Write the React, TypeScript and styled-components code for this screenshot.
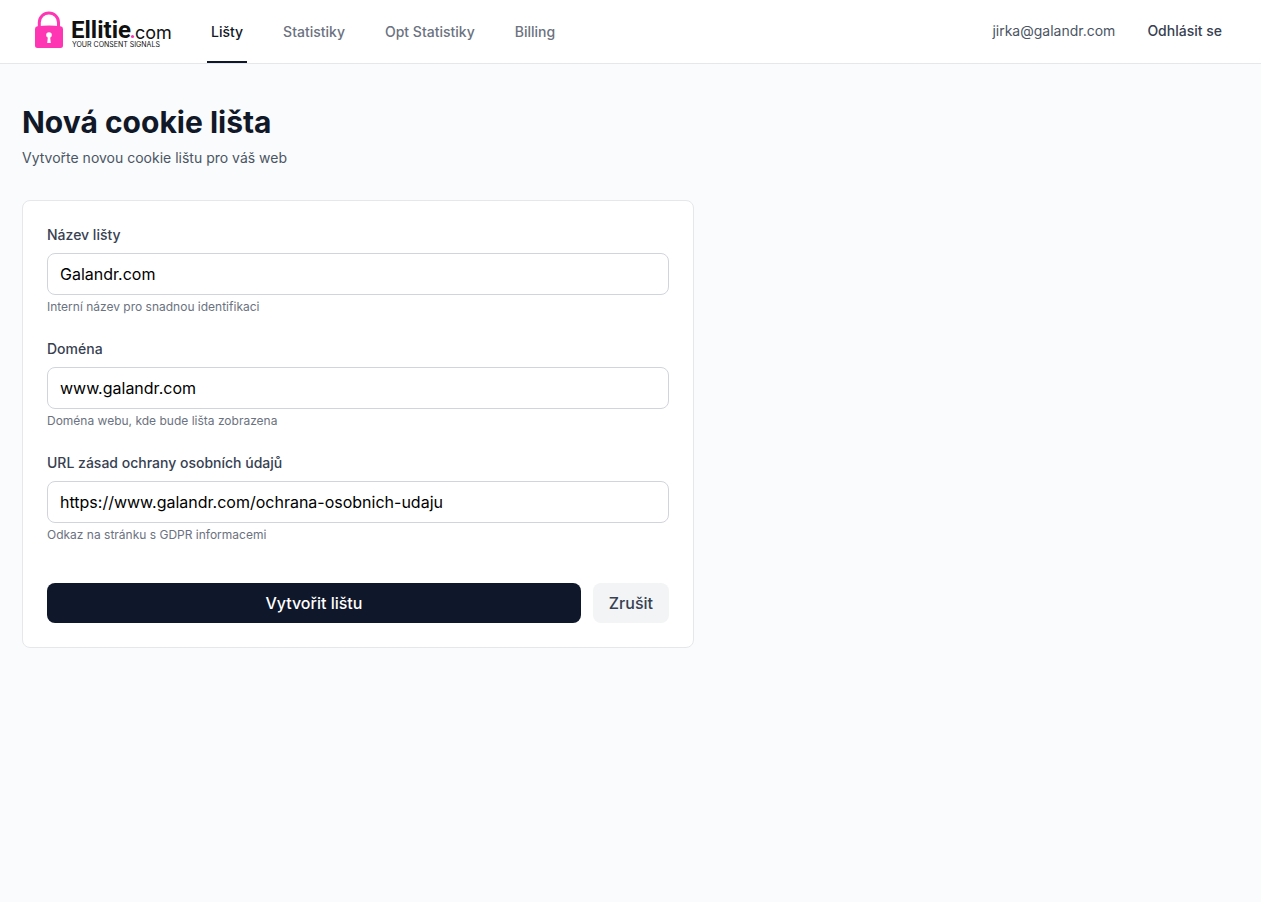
import React from 'react';
import styled, { createGlobalStyle, css } from 'styled-components';

const GlobalStyle = createGlobalStyle`
  *, *::before, *::after { box-sizing: border-box; }
  body {
    margin: 0;
    background: #f9fbfd;
    color: #111827;
    font-family: Inter, "Liberation Sans", sans-serif;
    font-size: 14px;
    line-height: 20px;
  }
`;

const Header = styled.header`
  display: flex;
  align-items: center;
  justify-content: space-between;
  height: 64px;
  padding: 0 39px 0 34px;
  background: #ffffff;
  border-bottom: 1px solid #e5e7eb;
`;

const HeaderGroup = styled.div`
  display: flex;
  align-items: center;
  align-self: stretch;
`;

const LogoLink = styled.a`
  display: flex;
  align-items: center;
  margin-right: 33px;
`;

const Nav = styled.nav`
  display: flex;
  align-self: stretch;
  gap: 32px;
`;

const NavLink = styled.a<{ $active?: boolean }>`
  display: flex;
  align-items: center;
  padding: 2px 4px 0;
  border-bottom: 2px solid transparent;
  color: #6b7280;
  font-weight: 500;
  text-decoration: none;
  ${({ $active }) => $active && css`
    border-color: #0f172a;
    color: #111827;
  `}
`;

const Account = styled.div`
  display: flex;
  align-items: center;
  gap: 32px;
  padding-bottom: 1px;
  color: #4b5563;
`;

const LogoutButton = styled.button`
  padding: 0;
  border: 0;
  background: none;
  color: #374151;
  font: inherit;
  font-weight: 500;
  cursor: pointer;
`;

const Main = styled.main`
  padding: 40px 22px;
`;

const Title = styled.h1`
  margin: 0;
  font-size: 30px;
  line-height: 36px;
  font-weight: 700;
`;

const Subtitle = styled.p`
  margin: 8px 0 32px;
  color: #4b5563;
`;

const FormCard = styled.form`
  display: flex;
  flex-direction: column;
  gap: 24px;
  max-width: 672px;
  padding: 24px;
  background: #ffffff;
  border: 1px solid #e5e7eb;
  border-radius: 8px;
`;

const Field = styled.div`
  display: flex;
  flex-direction: column;
`;

const Label = styled.label`
  margin-bottom: 8px;
  color: #374151;
  font-weight: 500;
`;

const TextInput = styled.input`
  width: 100%;
  height: 42px;
  padding: 8px 12px;
  border: 1px solid #d1d5db;
  border-radius: 8px;
  background: #ffffff;
  color: #000000;
  font: inherit;
  font-size: 16px;
  line-height: 24px;
`;

const Hint = styled.p`
  margin: 4px 0 0;
  color: #6b7280;
  font-size: 12px;
  line-height: 16px;
`;

const Actions = styled.div`
  display: flex;
  gap: 12px;
  padding-top: 16px;
`;

const Button = styled.button<{ $primary?: boolean }>`
  flex: ${({ $primary }) => ($primary ? '1' : 'none')};
  padding: 8px 16px;
  border: 0;
  border-radius: 8px;
  background: ${({ $primary }) => ($primary ? '#0f172a' : '#f3f4f6')};
  color: ${({ $primary }) => ($primary ? '#ffffff' : '#374151')};
  font: inherit;
  font-size: 16px;
  line-height: 24px;
  font-weight: 500;
  cursor: pointer;
`;

const Logo = () => (
  <svg width="140" height="41" viewBox="0 0 140 41" role="img" aria-label="Ellitie.com">
    <path d="M5.3 16v-4.5a9.6 9.6 0 0 1 19.2 0V16" fill="none" stroke="#ff36b3" strokeWidth="3" />
    <path d="M3.5 15.3Q15 13.8 26.5 15.3Q29 15.6 29 18V34.5Q29 37 26.5 37H3.5Q1 37 1 34.5V18Q1 15.6 3.5 15.3Z" fill="#ff36b3" />
    <circle cx="15" cy="24" r="2.8" fill="#ffffff" />
    <path d="M14 25h2l.8 7h-3.6z" fill="#ffffff" />
    <g fill="#111111">
      <text x="37" y="27" fontFamily="Roboto, sans-serif" fontSize="24" fontWeight="700">Ellitie</text>
      <circle cx="98.5" cy="25.5" r="1.6" fill="#ff36b3" />
      <text x="101" y="28" fontFamily="Inter, sans-serif" fontSize="18">com</text>
      <text x="38" y="36" fontFamily="Inter, sans-serif" fontSize="7">YOUR CONSENT SIGNALS</text>
    </g>
  </svg>
);

const navItems = ['Lišty', 'Statistiky', 'Opt Statistiky', 'Billing'];

const fields = [
  { id: 'name', label: 'Název lišty', value: 'Galandr.com', hint: 'Interní název pro snadnou identifikaci' },
  { id: 'domain', label: 'Doména', value: 'www.galandr.com', hint: 'Doména webu, kde bude lišta zobrazena' },
  { id: 'privacy', label: 'URL zásad ochrany osobních údajů', value: 'https://www.galandr.com/ochrana-osobnich-udaju', hint: 'Odkaz na stránku s GDPR informacemi' },
];

export default function App() {
  return (
    <>
      <GlobalStyle />
      <Header>
        <HeaderGroup>
          <LogoLink href="#"><Logo /></LogoLink>
          <Nav>
            {navItems.map((item, i) => (
              <NavLink key={item} href="#" $active={i === 0}>{item}</NavLink>
            ))}
          </Nav>
        </HeaderGroup>
        <Account>
          <span>jirka@galandr.com</span>
          <LogoutButton type="button">Odhlásit se</LogoutButton>
        </Account>
      </Header>
      <Main>
        <Title>Nová cookie lišta</Title>
        <Subtitle>Vytvořte novou cookie lištu pro váš web</Subtitle>
        <FormCard onSubmit={(e) => e.preventDefault()}>
          {fields.map((f) => (
            <Field key={f.id}>
              <Label htmlFor={f.id}>{f.label}</Label>
              <TextInput id={f.id} type="text" defaultValue={f.value} aria-describedby={f.id + '-hint'} />
              <Hint id={f.id + '-hint'}>{f.hint}</Hint>
            </Field>
          ))}
          <Actions>
            <Button type="submit" $primary>Vytvořit lištu</Button>
            <Button type="button">Zrušit</Button>
          </Actions>
        </FormCard>
      </Main>
    </>
  );
}
